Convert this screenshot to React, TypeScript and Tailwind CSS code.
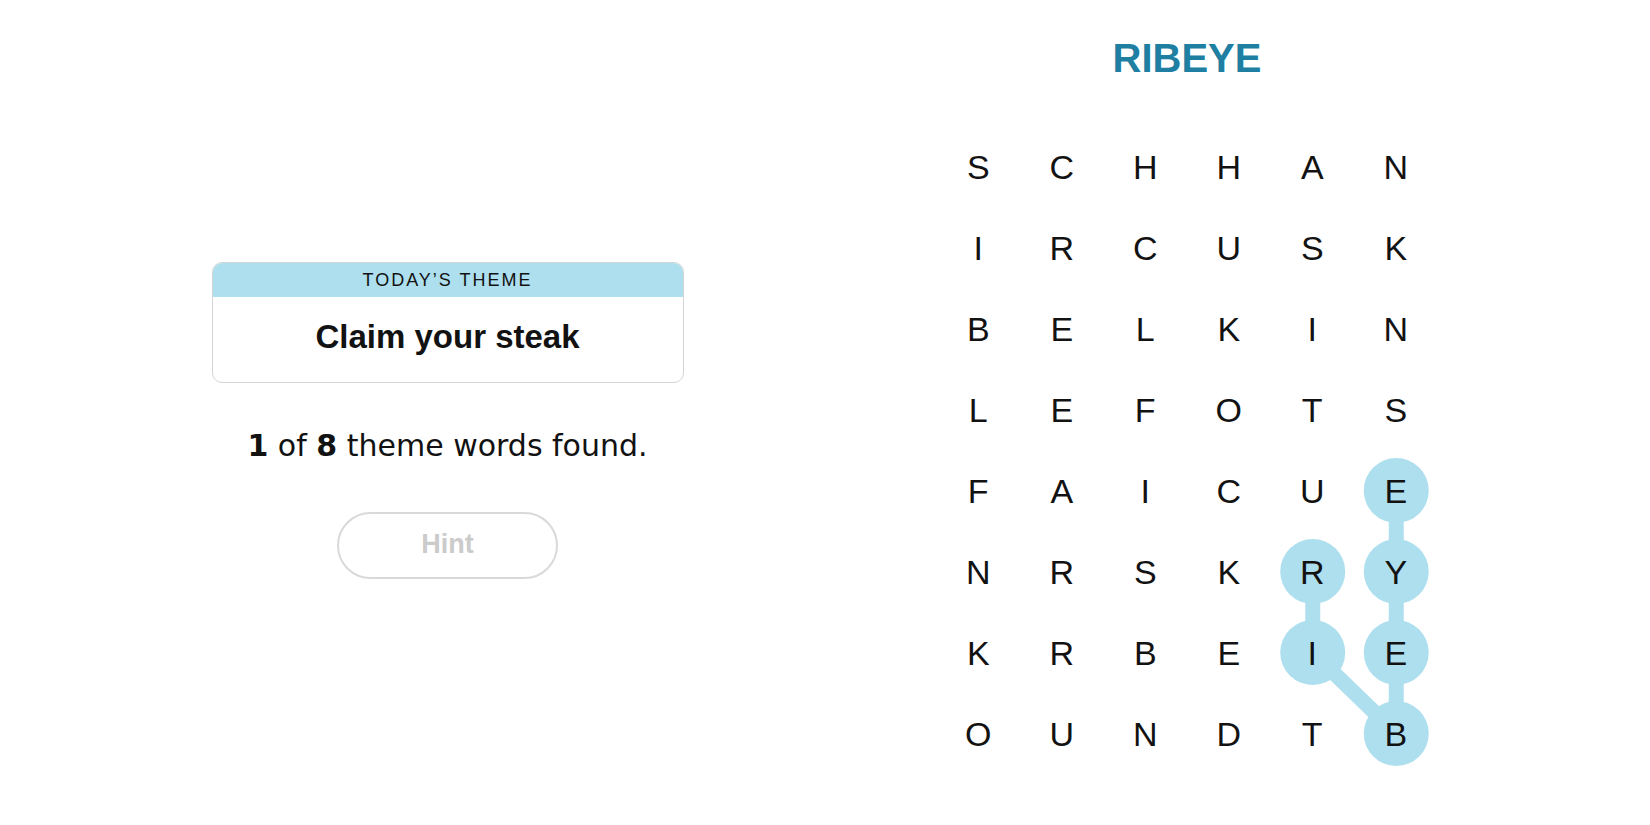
import React from 'react';

const LETTERS = [
  'SCHHAN',
  'IRCUSK',
  'BELKIN',
  'LEFOTS',
  'FAICUE',
  'NRSKRY',
  'KRBEIE',
  'OUNDTB',
];

// found word path, [row, col]
const PATH: [number, number][] = [
  [5, 4],
  [6, 4],
  [7, 5],
  [6, 5],
  [5, 5],
  [4, 5],
];

const CELL_W = 83.5;
const CELL_H = 81;

const cx = (c: number) => c * CELL_W + CELL_W / 2;
const cy = (r: number) => r * CELL_H + CELL_H / 2;

function Board() {
  return (
    <div className="relative w-[501px] h-[648px]">
      <svg className="absolute inset-0" width={501} height={648} viewBox="0 0 501 648">
        {PATH.slice(1).map(([r, c], i) => {
          const [pr, pc] = PATH[i];
          return (
            <line
              key={i}
              x1={cx(pc)}
              y1={cy(pr)}
              x2={cx(c)}
              y2={cy(r)}
              stroke="#aedfee"
              strokeWidth={15}
            />
          );
        })}
        {PATH.map(([r, c]) => (
          <circle key={`${r}-${c}`} cx={cx(c)} cy={cy(r)} r={32.5} fill="#aedfee" />
        ))}
      </svg>
      <div className="relative grid grid-cols-[repeat(6,83.5px)] auto-rows-[81px]">
        {LETTERS.map((row, r) =>
          row.split('').map((ch, c) => (
            <div
              key={`${r}-${c}`}
              className="flex items-center justify-center text-[34px] leading-none text-[#121212]"
            >
              {ch}
            </div>
          ))
        )}
      </div>
    </div>
  );
}

export default function App() {
  return (
    <div className="min-h-[825px] w-full bg-white font-['Liberation_Sans',Arial,sans-serif] text-[#121212]">
      <div className="flex justify-center gap-[252px]">
        {/* left: theme + progress */}
        <div className="w-[472px] pt-[262px] flex flex-col items-center -translate-x-[1px]">
          <div className="w-full rounded-[10px] border border-[#d4d4d4] overflow-hidden">
            <div className="h-[34px] bg-[#aedfee] flex items-center justify-center text-[18px] tracking-[0.11em] uppercase text-[#121212]">
              Today’s Theme
            </div>
            <div className="h-[85px] pb-[5px] flex items-center justify-center text-[33px] font-bold">
              Claim your steak
            </div>
          </div>

          <p className="mt-[48px] text-[30px] leading-none font-['DejaVu_Sans',sans-serif]">
            <span className="font-bold">1</span> of <span className="font-bold">8</span> theme words found.
          </p>

          <button className="mt-[51px] w-[221px] h-[67px] pb-[2px] rounded-full border-2 border-[#d9d9d9] text-[27px] font-bold text-[#cbcbcb]">
            Hint
          </button>
        </div>

        {/* right: board */}
        <div className="w-[501px] pt-[38px] flex flex-col items-center">
          <h1 className="text-[40px] leading-none font-bold text-[#1f7fa2]">RIBEYE</h1>
          <div className="mt-[48px]">
            <Board />
          </div>
        </div>
      </div>
    </div>
  );
}
